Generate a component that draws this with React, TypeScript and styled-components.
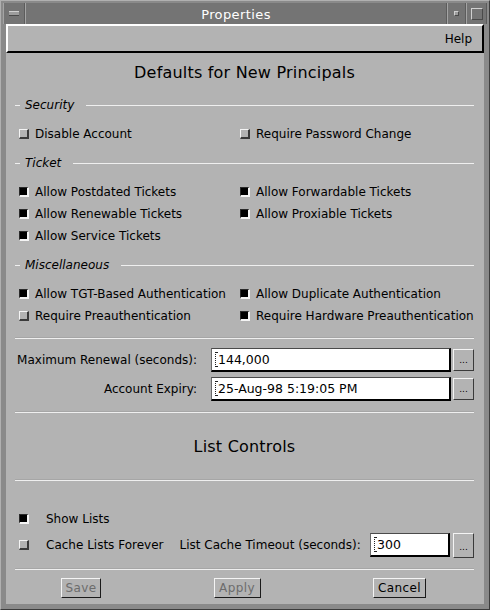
import React from 'react';
import styled, { createGlobalStyle } from 'styled-components';

const GlobalStyle = createGlobalStyle`
  html, body {
    margin: 0;
    padding: 0;
    background: #8c8c8c;
  }
  body {
    font-family: "DejaVu Sans", "Liberation Sans", sans-serif;
    font-size: 12px;
    color: #000;
  }
`;

const Window = styled.div`
  width: 490px;
  height: 610px;
  box-sizing: border-box;
  display: flex;
  flex-direction: column;
  background: #8a8a8a;
  border-top: 1px solid #b0b0b0;
  border-left: 1px solid #b0b0b0;
  border-right: 1px solid #3c3c3c;
  border-bottom: 1px solid #3c3c3c;
  padding: 2px 2px 5px 2px;
`;

const TitleBar = styled.div`
  height: 21px;
  display: flex;
  background: #747474;
  flex-shrink: 0;
`;

const TitleButton = styled.div<{ $w: number }>`
  width: ${p => p.$w}px;
  box-sizing: border-box;
  display: flex;
  align-items: center;
  justify-content: center;
  border-left: 1px solid #a4a4a4;
  border-right: 1px solid #5c5c5c;
`;

const MenuGlyph = styled.div`
  width: 10px;
  height: 3px;
  background: #9c9c9c;
  border-top: 1px solid #d0d0d0;
  border-bottom: 1px solid #4a4a4a;
`;

const MinGlyph = styled.div`
  width: 3px;
  height: 3px;
  background: #9c9c9c;
  border-top: 1px solid #d0d0d0;
  border-left: 1px solid #d0d0d0;
  border-bottom: 1px solid #4a4a4a;
  border-right: 1px solid #4a4a4a;
`;

const MaxGlyph = styled.div`
  width: 10px;
  height: 10px;
  border-top: 1px solid #d0d0d0;
  border-left: 1px solid #d0d0d0;
  border-bottom: 1px solid #4a4a4a;
  border-right: 1px solid #4a4a4a;
`;

const Title = styled.div`
  flex: 1;
  display: flex;
  align-items: center;
  justify-content: center;
  padding-top: 1px;
  color: #fff;
  font-size: 13px;
  letter-spacing: 0.4px;
  border-left: 1px solid #a4a4a4;
  border-right: 1px solid #5c5c5c;
`;

const Client = styled.div`
  flex: 1;
  margin: 0 3px;
  background: #b3b3b3;
  display: flex;
  flex-direction: column;
`;

const MenuBar = styled.div`
  height: 29px;
  box-sizing: border-box;
  display: flex;
  align-items: center;
  justify-content: flex-end;
  padding: 1px 10px 0 0;
  border-top: 2px solid #fff;
  border-left: 2px solid #fff;
  border-bottom: 2px solid #000;
  border-right: 2px solid #000;
`;

const Content = styled.div`
  display: flex;
  flex-direction: column;
  padding: 0 10px 0 9px;
`;

const Heading = styled.div<{ $h: number; $pt?: number }>`
  height: ${p => p.$h}px;
  box-sizing: border-box;
  padding-top: ${p => p.$pt ?? 0}px;
  line-height: ${p => p.$h - (p.$pt ?? 0)}px;
  text-align: center;
  font-size: 16px;
  letter-spacing: 0.2px;
`;

const Group = styled.div`
  & + & {
    margin-top: 5px;
  }
  &:last-of-type {
    margin-top: 6px;
  }
`;

const Legend = styled.div`
  height: 26px;
  display: flex;
  align-items: center;
`;

const LegendDash = styled.div`
  width: 5px;
  height: 1px;
  background: #efefef;
  margin-right: 5px;
`;

const LegendText = styled.span`
  font-style: italic;
  margin-right: 12px;
`;

const LegendLine = styled.div`
  flex: 1;
  height: 1px;
  background: #efefef;
`;

const CheckGrid = styled.div`
  margin-top: 5px;
  padding-left: 4px;
  display: grid;
  grid-template-columns: 221px 1fr;
  grid-auto-rows: 22px;
`;

const CheckItem = styled.label<{ $gap?: number }>`
  display: flex;
  align-items: center;
  gap: ${p => p.$gap ?? 6}px;
  white-space: nowrap;
`;

const Box = styled.span<{ $on: boolean }>`
  width: 10px;
  height: 10px;
  box-sizing: border-box;
  flex-shrink: 0;
  border-top: 1px solid ${p => (p.$on ? '#2a2a2a' : '#f4f4f4')};
  border-left: 1px solid ${p => (p.$on ? '#2a2a2a' : '#f4f4f4')};
  border-bottom: 2px solid ${p => (p.$on ? '#f4f4f4' : '#3a3a3a')};
  border-right: 2px solid ${p => (p.$on ? '#f4f4f4' : '#3a3a3a')};
  background: ${p => (p.$on ? '#000' : 'transparent')};
`;

const Separator = styled.div<{ $mt: number }>`
  height: 1px;
  margin-top: ${p => p.$mt}px;
  background: #efefef;
  border-top: 1px solid #a6a6a6;
`;

const FieldRow = styled.div<{ $mt: number }>`
  margin-top: ${p => p.$mt}px;
  height: 24px;
  display: grid;
  grid-template-columns: 182px 240px 21px;
  column-gap: 14px;
  align-items: center;
  & > :last-child {
    margin-left: -12px;
  }
`;

const FieldLabel = styled.span`
  text-align: right;
  white-space: nowrap;
`;

const Field = styled.div<{ $w?: number }>`
  ${p => (p.$w ? `width: ${p.$w}px;` : '')}
  height: 24px;
  box-sizing: border-box;
  display: flex;
  align-items: center;
  padding-left: 3px;
  background: #fff;
  border-top: 1px solid #4a4a4a;
  border-left: 1px solid #6a6a6a;
  border-bottom: 2px solid #000;
  border-right: 2px solid #000;
  font-size: 12.5px;
  white-space: nowrap;
  overflow: hidden;
`;

const Caret = styled.span`
  display: inline-block;
  width: 2px;
  height: 15px;
  border-left: 1px dotted #222;
  border-top: 1px dotted #222;
  border-bottom: 1px dotted #222;
  box-sizing: border-box;
  margin-right: 1px;
`;

const DotsButton = styled.div<{ $h: number }>`
  width: 21px;
  height: ${p => p.$h}px;
  box-sizing: border-box;
  flex-shrink: 0;
  display: flex;
  align-items: flex-end;
  justify-content: center;
  padding-bottom: 5px;
  font-size: 9px;
  line-height: 9px;
  border-top: 1px solid #f4f4f4;
  border-left: 1px solid #f4f4f4;
  border-bottom: 1px solid #3a3a3a;
  border-right: 1px solid #3a3a3a;
`;

const ListRow = styled.div<{ $mt: number; $h: number }>`
  margin-top: ${p => p.$mt}px;
  height: ${p => p.$h}px;
  padding-left: 4px;
  display: flex;
  align-items: center;
`;

const TimeoutLabel = styled.span`
  margin-left: 16px;
  white-space: nowrap;
`;

const FieldGroup = styled.div`
  margin-left: auto;
  display: flex;
  align-items: center;
  gap: 3px;
`;

const ButtonRow = styled.div`
  margin-top: 8px;
  padding: 0 48px 0 46px;
  display: flex;
  justify-content: space-between;
`;

const Button = styled.button<{ $w: number }>`
  width: ${p => p.$w}px;
  height: 20px;
  box-sizing: border-box;
  padding: 0;
  background: #b3b3b3;
  font-family: inherit;
  font-size: 12px;
  letter-spacing: 0.4px;
  color: #000;
  border-top: 1px solid #f4f4f4;
  border-left: 1px solid #f4f4f4;
  border-bottom: 1px solid #1a1a1a;
  border-right: 1px solid #1a1a1a;
  &:disabled {
    color: #6c6c6c;
  }
`;

type Check = { label: string; on: boolean };

const groups: { title: string; items: (Check | null)[] }[] = [
  {
    title: 'Security',
    items: [
      { label: 'Disable Account', on: false },
      { label: 'Require Password Change', on: false },
    ],
  },
  {
    title: 'Ticket',
    items: [
      { label: 'Allow Postdated Tickets', on: true },
      { label: 'Allow Forwardable Tickets', on: true },
      { label: 'Allow Renewable Tickets', on: true },
      { label: 'Allow Proxiable Tickets', on: true },
      { label: 'Allow Service Tickets', on: true },
      null,
    ],
  },
  {
    title: 'Miscellaneous',
    items: [
      { label: 'Allow TGT-Based Authentication', on: true },
      { label: 'Allow Duplicate Authentication', on: true },
      { label: 'Require Preauthentication', on: false },
      { label: 'Require Hardware Preauthentication', on: true },
    ],
  },
];

const App = () => {
  return (
    <>
      <GlobalStyle />
      <Window>
        <TitleBar>
          <TitleButton $w={22}>
            <MenuGlyph />
          </TitleButton>
          <Title>Properties</Title>
          <TitleButton $w={19}>
            <MinGlyph />
          </TitleButton>
          <TitleButton $w={21}>
            <MaxGlyph />
          </TitleButton>
        </TitleBar>

        <Client>
          <MenuBar>Help</MenuBar>
          <Content>
            <Heading $h={39}>Defaults for New Principals</Heading>

            {groups.map(g => (
              <Group key={g.title}>
                <Legend>
                  <LegendDash />
                  <LegendText>{g.title}</LegendText>
                  <LegendLine />
                </Legend>
                <CheckGrid>
                  {g.items.map((c, i) =>
                    c ? (
                      <CheckItem key={c.label}>
                        <Box $on={c.on} />
                        {c.label}
                      </CheckItem>
                    ) : (
                      <span key={i} />
                    )
                  )}
                </CheckGrid>
              </Group>
            ))}

            <Separator $mt={10} />

            <FieldRow $mt={9}>
              <FieldLabel>Maximum Renewal (seconds):</FieldLabel>
              <Field>
                <Caret />
                144,000
              </Field>
              <DotsButton $h={22}>...</DotsButton>
            </FieldRow>
            <FieldRow $mt={5}>
              <FieldLabel>Account Expiry:</FieldLabel>
              <Field>
                <Caret />
                25-Aug-98 5:19:05 PM
              </Field>
              <DotsButton $h={22}>...</DotsButton>
            </FieldRow>

            <Separator $mt={10} />
            <Heading $h={66} $pt={2}>List Controls</Heading>
            <Separator $mt={0} />

            <ListRow $mt={27} $h={22}>
              <CheckItem $gap={17}>
                <Box $on />
                Show Lists
              </CheckItem>
            </ListRow>
            <ListRow $mt={3} $h={24}>
              <CheckItem $gap={17}>
                <Box $on={false} />
                Cache Lists Forever
              </CheckItem>
              <TimeoutLabel>List Cache Timeout (seconds):</TimeoutLabel>
              <FieldGroup>
                <Field $w={80}>
                  <Caret />
                  300
                </Field>
                <DotsButton $h={25}>...</DotsButton>
              </FieldGroup>
            </ListRow>

            <Separator $mt={11} />

            <ButtonRow>
              <Button $w={40} disabled>
                Save
              </Button>
              <Button $w={47} disabled>
                Apply
              </Button>
              <Button $w={53}>Cancel</Button>
            </ButtonRow>
          </Content>
        </Client>
      </Window>
    </>
  );
};

export default App;
